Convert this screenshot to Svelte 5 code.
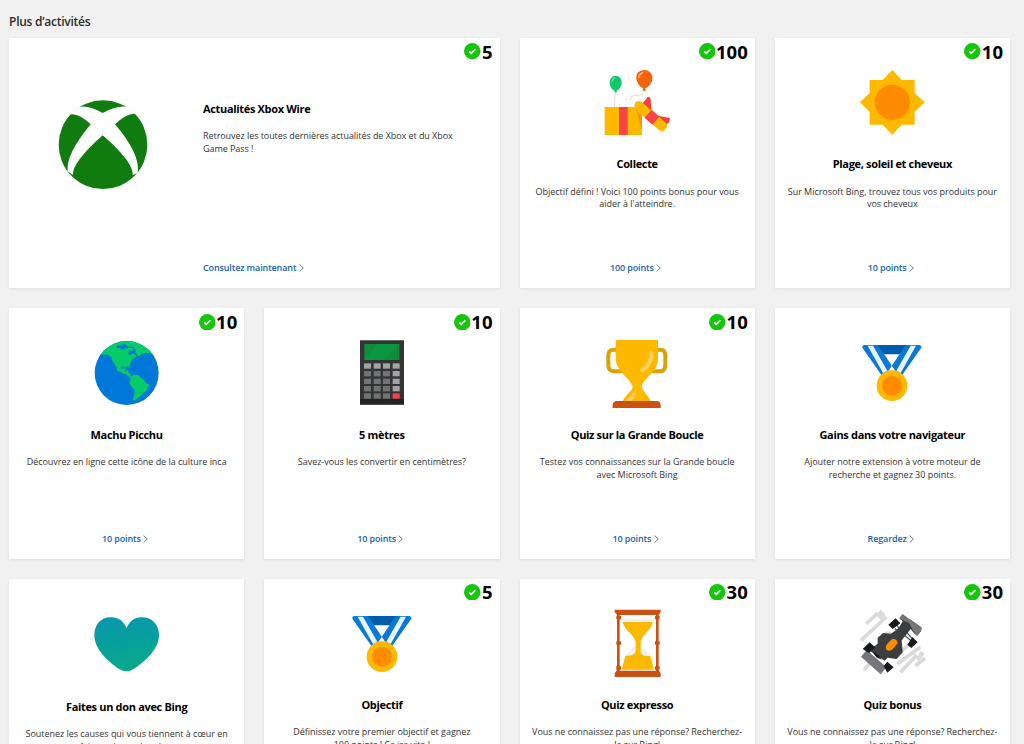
<script lang="ts">
    type Activity = {
        icon: string;
        title: string;
        text: string;
        link: string;
        points?: number;
        wide?: boolean;
        low?: boolean;
    };

    // line breaks in text are kept by the stylesheet
    const activities: Activity[] = [
        { icon: "xbox", title: "Actualités Xbox Wire", text: "Retrouvez les toutes dernières actualités de Xbox et du Xbox\nGame Pass !", link: "Consultez maintenant", points: 5, wide: true },
        { icon: "gift", title: "Collecte", text: "Objectif défini ! Voici 100 points bonus pour vous\naider à l'atteindre.", link: "100 points", points: 100 },
        { icon: "sun", title: "Plage, soleil et cheveux", text: "Sur Microsoft Bing, trouvez tous vos produits pour\nvos cheveux", link: "10 points", points: 10 },
        { icon: "globe", title: "Machu Picchu", text: "Découvrez en ligne cette icône de la culture inca", link: "10 points", points: 10 },
        { icon: "calculator", title: "5 mètres", text: "Savez-vous les convertir en centimètres?", link: "10 points", points: 10 },
        { icon: "trophy", title: "Quiz sur la Grande Boucle", text: "Testez vos connaissances sur la Grande boucle\navec Microsoft Bing", link: "10 points", points: 10 },
        { icon: "medal", title: "Gains dans votre navigateur", text: "Ajouter notre extension à votre moteur de\nrecherche et gagnez 30 points.", link: "Regardez" },
        { icon: "heart", title: "Faites un don avec Bing", text: "Soutenez les causes qui vous tiennent à cœur en\nfaisant des recherches", link: "Regardez", low: true },
        { icon: "medal", title: "Objectif", text: "Définissez votre premier objectif et gagnez\n100 points ! Ça ira vite !", link: "5 points", points: 5 },
        { icon: "hourglass", title: "Quiz expresso", text: "Vous ne connaissez pas une réponse? Recherchez-\nla sur Bing!", link: "30 points", points: 30 },
        { icon: "car", title: "Quiz bonus", text: "Vous ne connaissez pas une réponse? Recherchez-\nla sur Bing!", link: "30 points", points: 30 },
    ];

    // every icon is drawn on a 270 unit square, only the origin differs
    const viewBoxes: Record<string, string> = {
        xbox: "0 1 270 270",
        gift: "6 0 270 270",
        sun: "-8 0 270 270",
        globe: "1 0 270 270",
        calculator: "0 0 270 270",
        trophy: "1 0 270 270",
        medal: "-2 0 270 270",
        heart: "6 2 270 270",
        hourglass: "1 2 270 270",
        car: "-2 2 270 270",
    };

    const keyRows = [100, 123, 146, 168, 190];
    const keyCols = [81, 110, 138, 167];

    function keyColor(row: number, col: number) {
        if (row == 4 && col == 3) return "#f8443f";
        if (row == 0 || col == 3) return "#a3a3a3";
        return "#737373";
    }
</script>

<main class="page">
    <h1>Plus d’activités</h1>

    <div class="grid">
        {#each activities as item}
            <article class="card" class:wide={item.wide} class:low={item.low}>
                <svg class="icon" viewBox={viewBoxes[item.icon]} aria-hidden="true">
                    {#if item.icon == "xbox"}
                        <circle cx="135" cy="135" r="133" fill="#107c10" />
                        <path fill="#fff" d="M65 21Q95 17 134 40Q174 17 206 21L242 47Q218 30 171 74Q248 164 239 220L224 226Q227 188 134 107Q44 187 44 226L29 215Q23 164 98 74Q54 32 27 48Z" />
                    {:else if item.icon == "gift"}
                        <path fill="none" stroke="#d9c8c4" stroke-width="2" d="M77 96Q73 115 74 141M162 93V98Q157 107 140 106Q122 106 119 119" />
                        <path fill="none" stroke="#dedbe7" stroke-width="4" stroke-dasharray="4 13" d="M101 67L137 37M80 105L112 99M107 117H126M87 133L119 137" />
                        <path fill="#10c968" d="M77 47C65 47 59 57 59 68C59 80 67 90 75 92L72 97H82L79 92C89 88 95 79 95 68C95 56 88 47 77 47Z" />
                        <path fill="#f7630c" d="M163 30C147 30 138 41 139 54C140 70 151 81 160 85L157 92H168L165 85C177 81 187 68 187 54C187 39 177 30 163 30Z" />
                        <path fill="none" stroke="#7ce5a7" stroke-width="4" stroke-linecap="round" d="M66 64Q67 57 73 54" />
                        <path fill="none" stroke="#ffab7b" stroke-width="5" stroke-linecap="round" d="M147 52Q147 42 157 38" />
                        <path fill="#fdb900" d="M44 141H156V225H44Z" />
                        <path fill="#fa4345" d="M87 141H113V225H87Z" />
                        <path fill="#f39a00" d="M136 141H156V211Z" />
                        <path fill="#f93e42" d="M174 110L158 129L170 155L185 150L181 113ZM203 167L240 174L238 185L223 201L200 180Z" />
                        <path fill="#fdb900" d="M138 125Q149 119 160 130L231 192Q233 201 222 213Q215 217 207 210L138 151Q128 140 138 125Z" />
                        <path fill="#fa4345" d="M185 149L208 170L187 194L164 173Z" />
                    {:else if item.icon == "sun"}
                        <path fill="#fdb900" d="M128 30L156 60H195V99L225 127L195 156V194H156L128 224L99 194H60V156L31 127L60 99V60H99Z" />
                        <circle cx="128" cy="127" r="53" fill="#ff8c00" />
                    {:else if item.icon == "globe"}
                        <clipPath id="sphere"><circle cx="135" cy="129" r="96" /></clipPath>
                        <circle cx="135" cy="129" r="96" fill="#0078d9" />
                        <g clip-path="url(#sphere)" fill="#05cc68">
                            <path d="M55 75L77 73L89 81Q91 92 95 96L104 111L107 122L119 127L125 131L133 133L142 133L140 121L132 122L130 114L120 118L115 109L124 105L136 103L144 108L148 94L158 84L166 81L160 73L151 71L145 76L140 69L144 61L154 64L153 55L141 52L137 56L130 52L128 60L120 58L115 54H105L104 47L129 42L132 34L95 32Z" />
                            <path d="M120 30L138 50L155 50L160 53L162 70L171 80L180 71L193 68L210 71L220 83L205 48L176 28Z" />
                            <path d="M100 85H148L142 110H108Z" />
                            <path d="M145 140L158 134L171 136L179 144L187 151L192 158L203 164L198 174L194 183L184 189L177 199L168 203L160 211H153L158 193L159 179L150 170L143 159L147 149Z" />
                            <path d="M132 124L147 132L146 143L137 137Z" />
                        </g>
                    {:else if item.icon == "calculator"}
                        <path fill="#333436" d="M69 31H201V223H69Z" />
                        <path fill="#222325" d="M69 207H201V224H69Z" />
                        <path fill="#138c3a" d="M82 42H187V90H82Z" />
                        <path fill="#0b9741" d="M120 42H187L139 90H82Z" />
                        {#each keyRows as y, row}
                            {#each keyCols as x, col}
                                <rect {x} {y} width="21" height="16" fill={keyColor(row, col)} />
                            {/each}
                        {/each}
                    {:else if item.icon == "trophy"}
                        <path fill="none" stroke="#dca104" stroke-width="12" d="M73 59H64Q50 60 50 76V106Q51 122 66 124H95M199 59H207Q221 60 221 76V106Q220 122 207 124H177" />
                        <path fill="#fdb900" d="M72 30H199V89C197 126 154 145 150 170C152 184 172 197 177 214H93C99 196 121 185 123 170C119 149 76 126 72 89Z" />
                        <path fill="none" stroke="#ffd35b" stroke-width="13" stroke-linecap="round" d="M179 69Q182 99 152 121" />
                        <path fill="#ffd35b" d="M132 180L102 213H119Q135 195 132 180Z" />
                        <path fill="#cb5012" d="M63 234V224Q64 214 76 213H195Q206 214 207 224V234Z" />
                    {:else if item.icon == "medal"}
                        <path fill="#035bab" d="M75 45H190L175 73H90Z" />
                        <path fill="#0a78d6" d="M49 45H91L145 126L102 136L44 53Q42 47 49 45ZM216 45H174L120 126L163 136L221 53Q223 47 216 45Z" />
                        <path fill="#e8f7ff" d="M60 47H76L119 122L106 129ZM205 47H189L146 122L159 129Z" />
                        <circle cx="133" cy="167" r="46" fill="#fdb900" />
                        <circle cx="133" cy="167" r="30" fill="#ff8c00" />
                    {:else if item.icon == "heart"}
                        <linearGradient id="teal" x1="0" y1="0" x2="0.25" y2="1">
                            <stop offset="0" stop-color="#0796b0" />
                            <stop offset="1" stop-color="#08a98b" />
                        </linearGradient>
                        <path fill="url(#teal)" d="M140 84C130 62 115 50 92 51C62 51 43 74 43 104C43 145 81 181 117 206Q140 220 161 206C199 181 237 145 237 104C237 73 216 51 186 51C164 50 147 63 140 84Z" />
                    {:else if item.icon == "hourglass"}
                        <path fill="#f0f0f2" d="M91 55H185V69H91ZM132 136H146L180 167H99Z" />
                        <path fill="#fdb900" d="M93 65H183C179 90 155 99 147 122V155C148 163 154 166 164 167H176L187 208H90L101 167C119 166 133 163 132 149V124C125 101 99 91 93 65Z" />
                        <path fill="#cb5012" d="M69 28H207V35L201 44V209L207 219V230H69V219L76 209V44L69 35ZM84 44V211H193V44Z" fill-rule="evenodd" />
                        <path fill="#cb5012" d="M74 47H88V57H74ZM190 47H204V57H190ZM74 123H88V133H74ZM190 123H204V133H190ZM74 198H88V208H74ZM190 198H204V208H190Z" />
                    {:else if item.icon == "car"}
                        <path stroke="#dadadb" stroke-width="11" d="M55 71L90 38M40 120L116 50M49 209L69 186M158 155L183 134M149 191L218 140M158 216L205 167M203 196L232 174" />
                        <path fill="#dcdcdd" d="M84 43L99 28L114 43L98 59ZM190 151L210 167L220 151L231 161L213 184ZM117 92L102 105L117 117L142 99ZM151 142L166 153L151 168Z" />
                        <path stroke="#555" stroke-width="4" d="M148 74L158 93M164 99L190 121M142 84L158 101M173 92L193 114" />
                        <path fill="#3c3d3f" d="M156 55L165 42L188 59L221 81Q225 91 208 106Q198 99 189 86L162 120L165 156L147 176L119 172L111 181L64 150L90 130V112L106 98L130 100L153 84L165 63Z" />
                        <path fill="#77777a" d="M154 54L164 42Q173 52 192 60L221 81Q221 97 208 106L199 95L184 68Q169 62 154 54ZM40 169L57 149L116 200L99 222Z" />
                        <path fill="#18191a" d="M122 73L144 54L158 69L135 86ZM179 133L194 110L210 126L191 143ZM45 146L66 126L82 141L64 158ZM108 197L119 184L138 201L119 217Z" />
                        <path fill="#111" d="M73 153L88 162L103 178L86 171Z" />
                        <path fill="#ff8c00" d="M120 129L134 115Q149 115 150 129L133 149Q111 156 115 137Z" />
                    {/if}
                </svg>

                <div class="body">
                    <h2>{item.title}</h2>
                    <p>{item.text}</p>
                    <a href="#top">
                        <span>{item.link}</span>
                        <svg class="chevron" viewBox="0 0 5 8"><path d="M0.6 0.5L4.3 4L0.6 7.5" /></svg>
                    </a>
                </div>

                {#if item.points}
                    <div class="badge">
                        <svg viewBox="0 0 16 16"><circle cx="8" cy="8" r="8" /><path d="M5.1 8.2L7 10.1L11 6.1" /></svg>
                        <span>{item.points}</span>
                    </div>
                {/if}
            </article>
        {/each}
    </div>
</main>

<style>
    :global(body) {
        margin: 0;
        background: #f1f1f1;
    }

    .page {
        box-sizing: border-box;
        height: 744px;
        overflow: hidden;
        padding: 13px 14px 0 9px;
        background: #f1f1f1;
        font-family: "Open Sans", "Noto Sans", sans-serif;
        color: #000;
    }

    h1 {
        margin: 0 0 7px;
        font-size: 12px;
        line-height: 18px;
        font-weight: 600;
        letter-spacing: -0.25px;
        color: #2b2b2b;
    }

    .grid {
        display: grid;
        grid-template-columns: repeat(4, 1fr);
        grid-auto-rows: 250.3px;
        gap: 20px;
    }

    .card {
        position: relative;
        display: flex;
        flex-direction: column;
        align-items: center;
        box-sizing: border-box;
        padding: 22px 0 13px;
        background: #fff;
        box-shadow: 0 1px 3px rgba(0, 0, 0, 0.08);
        text-align: center;
    }

    .icon {
        flex: none;
        width: 90px;
        height: 90px;
    }

    .body {
        flex: 1;
        display: flex;
        flex-direction: column;
        align-items: center;
        padding-top: 6.3px;
    }

    .low .body {
        padding-top: 8.3px;
    }

    h2 {
        margin: 0;
        font-size: 11px;
        line-height: 16px;
        font-weight: 700;
        letter-spacing: -0.33px;
    }

    p {
        margin: 13.5px 0 0;
        font-size: 9px;
        line-height: 12.6px;
        letter-spacing: -0.03px;
        white-space: pre;
        color: #333;
    }

    a {
        display: flex;
        align-items: center;
        gap: 2.5px;
        margin: auto 3px 0 0;
        font-size: 9px;
        line-height: 14px;
        font-weight: 600;
        letter-spacing: -0.13px;
        color: #1664ad;
        text-decoration: none;
    }

    .chevron {
        width: 5px;
        height: 8px;
        fill: none;
        stroke: #4a7199;
        stroke-width: 0.9;
    }

    .wide {
        grid-column: span 2;
        flex-direction: row;
        align-items: stretch;
        padding: 62px 0 13px 49px;
        text-align: left;
    }

    .wide .body {
        align-items: flex-start;
        padding: 1px 0 0 55px;
    }

    .wide p {
        margin-top: 13px;
        letter-spacing: -0.06px;
    }

    .badge {
        position: absolute;
        top: 3.6px;
        right: 7px;
        display: flex;
        align-items: center;
        gap: 1px;
        font-size: 18.5px;
        line-height: 20px;
        font-weight: 700;
    }

    .badge svg {
        width: 16.5px;
        height: 16.5px;
        fill: #16c60c;
    }

    .badge path {
        fill: none;
        stroke: #fff;
        stroke-width: 1.6;
    }
</style>
